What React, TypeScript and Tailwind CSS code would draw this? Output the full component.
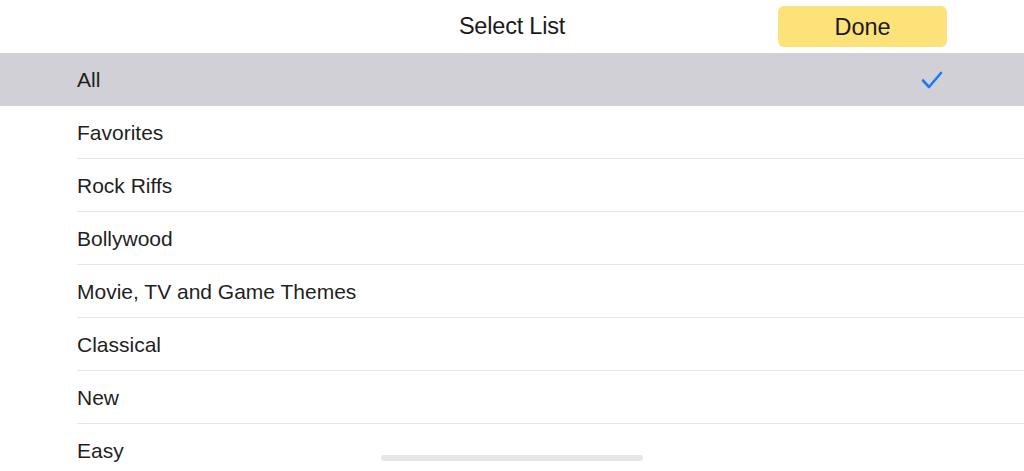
import React from "react";

const items = [
  "All",
  "Favorites",
  "Rock Riffs",
  "Bollywood",
  "Movie, TV and Game Themes",
  "Classical",
  "New",
  "Easy",
];

export default function App() {
  return (
    <div
      className="relative w-[1024px] h-[471px] overflow-hidden bg-white text-[#1f1f1f]"
      style={{ fontFamily: '"Liberation Sans", Arial, sans-serif' }}
    >
      <div className="relative h-[53px] flex items-center justify-center">
        <span className="text-[23.5px] tracking-[-0.2px] text-[#1a1a1a]">Select List</span>
        <button className="absolute left-[778px] top-[6px] w-[169px] h-[41px] rounded-[6px] bg-[#fde27a] text-[23.5px] text-[#1a1a1a] flex items-center justify-center pt-[3px]">
          Done
        </button>
      </div>
      <div className="flex flex-col">
        {items.map((it, i) => (
          <div
            key={it}
            className={
              i === 0
                ? "h-[53px] bg-[#d1d0d6] flex items-center pl-[77px] pr-[80px]"
                : "h-[53px] flex pl-[77px]"
            }
          >
            {i === 0 ? (
              <>
                <span className="text-[21px] flex-1 pt-[1px]">{it}</span>
                <svg width="22" height="18" viewBox="0 0 22 18" className="mr-[1px]">
                  <path
                    d="M2 9.5 L8 16 L20 2"
                    fill="none"
                    stroke="#1a7cf5"
                    strokeWidth="2.6"
                    strokeLinecap="round"
                    strokeLinejoin="round"
                  />
                </svg>
              </>
            ) : (
              <div
                className={
                  i === items.length - 1
                    ? "flex-1 flex items-center pt-[1px]"
                    : "flex-1 flex items-center pt-[2px] border-b border-[#e6e6e8]"
                }
              >
                <span className="text-[21px]">{it}</span>
              </div>
            )}
          </div>
        ))}
      </div>
      <div className="absolute left-[381px] top-[455px] w-[262px] h-[6px] rounded-full bg-[#e6e6e6]" />
    </div>
  );
}
